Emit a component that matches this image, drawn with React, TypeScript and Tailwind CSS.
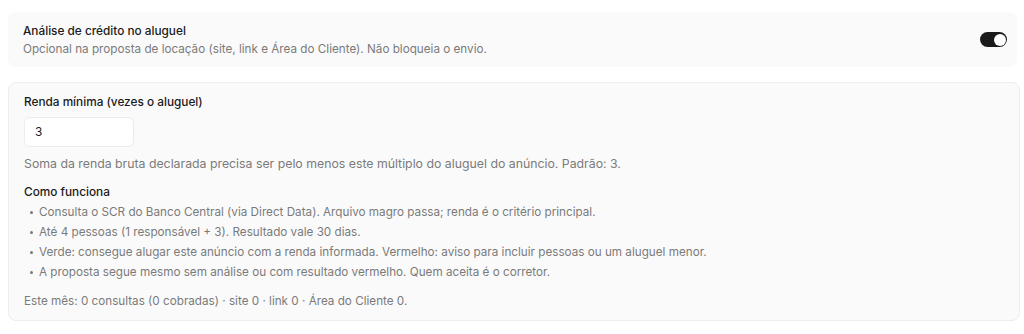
import { useState } from "react";

const bullets = [
  "Consulta o SCR do Banco Central (via Direct Data). Arquivo magro passa; renda é o critério principal.",
  "Até 4 pessoas (1 responsável + 3). Resultado vale 30 dias.",
  "Verde: consegue alugar este anúncio com a renda informada. Vermelho: aviso para incluir pessoas ou um aluguel menor.",
  "A proposta segue mesmo sem análise ou com resultado vermelho. Quem aceita é o corretor.",
];

export default function App() {
  const [enabled, setEnabled] = useState(true);
  const [multiplier, setMultiplier] = useState("3");

  return (
    <div className="min-h-[334px] w-full bg-white pl-2 pr-1 pt-3 font-['Inter',sans-serif] text-[#111]">
      <div className="mr-[3px] flex h-[55px] items-center justify-between rounded-lg bg-[#fafafa] pl-[15px] pr-[10px]">
        <div className="flex flex-col gap-[3px]">
          <p className="text-[11.8px] font-medium leading-[15px] text-[#1a1a1a]">Análise de crédito no aluguel</p>
          <p className="text-[11.7px] leading-[14px] text-[#7a7a7a]">
            Opcional na proposta de locação (site, link e Área do Cliente). Não bloqueia o envio.
          </p>
        </div>
        <button
          type="button"
          onClick={() => setEnabled(!enabled)}
          className={`flex h-[15px] w-[27px] items-center rounded-full p-[1.5px] ${enabled ? "justify-end bg-[#1a1a1a]" : "justify-start bg-[#d4d4d4]"}`}
        >
          <span className="h-[12px] w-[12px] rounded-full bg-white" />
        </button>
      </div>

      <div className="mt-[15px] rounded-lg border border-[#ededed] bg-[#fafafa] px-[15px] pb-[11px] pt-[11px]">
        <p className="text-[11.8px] font-medium leading-[16px] text-[#1a1a1a]">Renda mínima (vezes o aluguel)</p>
        <input
          value={multiplier}
          onChange={(e) => setMultiplier(e.target.value)}
          className="mt-[7px] block h-[30px] w-[110px] rounded-md border border-[#ececec] bg-white px-[10px] text-[11.8px] text-[#1a1a1a] outline-none"
        />
        <p className="mt-[9px] text-[12.3px] leading-[16px] text-[#7a7a7a]">
          Soma da renda bruta declarada precisa ser pelo menos este múltiplo do aluguel do anúncio. Padrão: 3.
        </p>
        <p className="mt-[12px] text-[11.8px] font-medium leading-[16px] text-[#1a1a1a]">Como funciona</p>
        <ul className="mt-[4px] flex flex-col gap-[4px] pl-[6px]">
          {bullets.map((b) => (
            <li key={b} className="flex items-center gap-[6px] text-[11.7px] leading-[16px] text-[#7a7a7a]">
              <span className="h-[3px] w-[3px] rounded-full bg-[#7a7a7a]" />
              {b}
            </li>
          ))}
        </ul>
        <p className="mt-[13px] text-[11.7px] leading-[16px] text-[#7a7a7a]">
          Este mês: 0 consultas (0 cobradas) · site 0 · link 0 · Área do Cliente 0.
        </p>
      </div>
    </div>
  );
}
